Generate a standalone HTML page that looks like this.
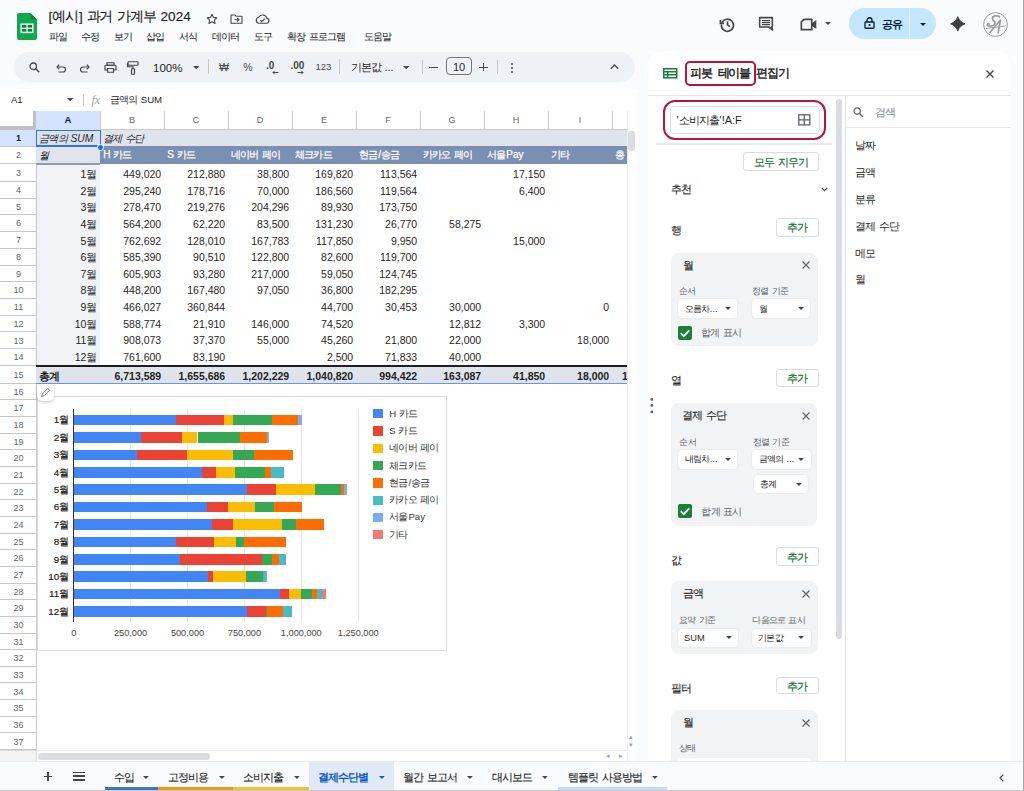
<!DOCTYPE html>
<html><head><meta charset="utf-8">
<style>
*{box-sizing:border-box;margin:0;padding:0}
html,body{width:1024px;height:791px;overflow:hidden;background:#f9fbfd;font-family:"Liberation Sans", sans-serif;color:#1f1f1f}
#root{position:relative;width:1024px;height:791px;overflow:hidden}
.t{position:absolute;height:20px;line-height:20px;white-space:nowrap}
.k{letter-spacing:-0.09em}
svg{position:absolute;overflow:visible}
</style></head><body><div id="root">
<svg style="left:17px;top:12.5px" width="20" height="27" viewBox="0 0 20 27"><path d="M1.8 0H13.5L20 6.5V25.2A1.8 1.8 0 0 1 18.2 27H1.8A1.8 1.8 0 0 1 0 25.2V1.8A1.8 1.8 0 0 1 1.8 0Z" fill="#0ea84f"/><path d="M13.5 0L20 6.5H15A1.5 1.5 0 0 1 13.5 5Z" fill="#0b8a3e"/><rect x="4.2" y="11.2" width="11.6" height="8.2" fill="#0b7f3a" stroke="#e8fff0" stroke-width="1.5"/><line x1="4.2" y1="15.3" x2="15.8" y2="15.3" stroke="#e8fff0" stroke-width="1.3"/><line x1="10" y1="11.2" x2="10" y2="19.4" stroke="#e8fff0" stroke-width="1.3"/></svg><div class="t" style="left:48.50px;top:7.30px;font-size:13.6px;color:#1f1f1f;-webkit-text-stroke:0.15px #1f1f1f">[<span class="k">예</span>시] <span class="k">과</span>거 <span class="k">가계</span>부 2024</div><div class="t" style="left:48.80px;top:27.30px;font-size:10.4px;color:#1f1f1f;-webkit-text-stroke:0.06px #1f1f1f"><span class="k">파</span>일</div><div class="t" style="left:81.40px;top:27.30px;font-size:10.4px;color:#1f1f1f;-webkit-text-stroke:0.06px #1f1f1f"><span class="k">수</span>정</div><div class="t" style="left:113.80px;top:27.30px;font-size:10.4px;color:#1f1f1f;-webkit-text-stroke:0.06px #1f1f1f"><span class="k">보</span>기</div><div class="t" style="left:146.40px;top:27.30px;font-size:10.4px;color:#1f1f1f;-webkit-text-stroke:0.06px #1f1f1f"><span class="k">삽</span>입</div><div class="t" style="left:179.00px;top:27.30px;font-size:10.4px;color:#1f1f1f;-webkit-text-stroke:0.06px #1f1f1f"><span class="k">서</span>식</div><div class="t" style="left:211.70px;top:27.30px;font-size:10.4px;color:#1f1f1f;-webkit-text-stroke:0.06px #1f1f1f"><span class="k">데이</span>터</div><div class="t" style="left:254.30px;top:27.30px;font-size:10.4px;color:#1f1f1f;-webkit-text-stroke:0.06px #1f1f1f"><span class="k">도</span>구</div><div class="t" style="left:286.90px;top:27.30px;font-size:10.4px;color:#1f1f1f;-webkit-text-stroke:0.06px #1f1f1f"><span class="k">확</span>장 <span class="k">프로그</span>램</div><div class="t" style="left:363.70px;top:27.30px;font-size:10.4px;color:#1f1f1f;-webkit-text-stroke:0.06px #1f1f1f"><span class="k">도움</span>말</div><svg style="left:205.5px;top:12.6px" width="12" height="12" viewBox="0 0 24 24"><path d="M12 2.5l2.9 6.3 6.9.7-5.2 4.6 1.5 6.8L12 17.4l-6.1 3.5 1.5-6.8-5.2-4.6 6.9-.7z" fill="none" stroke="#444746" stroke-width="2.2" stroke-linejoin="round"/></svg><svg style="left:230px;top:13.6px" width="13" height="10" viewBox="0 0 26 20"><path d="M2 2h8l2 2.5h12v14H2z" fill="none" stroke="#444746" stroke-width="2.2" stroke-linejoin="round"/><path d="M9 11.5h9M14.5 8l3.5 3.5-3.5 3.5" fill="none" stroke="#444746" stroke-width="2.2"/></svg><svg style="left:254.5px;top:14px" width="15" height="10" viewBox="0 0 30 20"><path d="M8 18.5A6 6 0 0 1 7.5 6.6 8.5 8.5 0 0 1 23.3 8.2 5.2 5.2 0 0 1 23 18.5Z" fill="none" stroke="#444746" stroke-width="2.2" stroke-linejoin="round"/><path d="M10.5 12.5l3 3 6-6" fill="none" stroke="#444746" stroke-width="2.2"/></svg><svg style="left:719px;top:15.5px" width="17" height="17" viewBox="0 0 24 24"><path d="M4.2 9.5A8.5 8.5 0 1 1 3.5 12" fill="none" stroke="#444746" stroke-width="2.4"/><path d="M2 5.5v5h5" fill="none" stroke="#444746" stroke-width="2.4"/><path d="M12 7.5v5l3.5 2.5" fill="none" stroke="#444746" stroke-width="2.4"/></svg><svg style="left:757.5px;top:15.5px" width="16" height="16" viewBox="0 0 24 24"><path d="M2.5 2.5h19v14h-1.5l2 4.5-6-4.5H2.5z" fill="none" stroke="#444746" stroke-width="2.4" stroke-linejoin="round"/><path d="M6 7h12M6 10h12M6 13h12" stroke="#444746" stroke-width="2"/></svg><svg style="left:800px;top:17.5px" width="17" height="13" viewBox="0 0 26 20"><path d="M6 2h12v16H2V6z" fill="none" stroke="#444746" stroke-width="2.6" stroke-linejoin="round"/><path d="M18 8l7-5v14l-7-5z" fill="#444746"/></svg><svg style="left:825px;top:22px" width="6" height="3" viewBox="0 0 6 3"><path d="M0 0h6L3 3z" fill="#444746"/></svg><div style="position:absolute;left:849.00px;top:8.00px;width:87.00px;height:31.00px;background:#c2e7ff;border-radius:16px"></div><div style="position:absolute;left:909.00px;top:8.00px;width:1.00px;height:31.00px;background:#e3f2fd"></div><svg style="left:863.5px;top:17px" width="11" height="12" viewBox="0 0 22 24"><rect x="2" y="10" width="18" height="12.5" rx="1.5" fill="none" stroke="#001d35" stroke-width="2.6"/><path d="M6 10V6.5a5 5 0 0 1 10 0V10" fill="none" stroke="#001d35" stroke-width="2.6"/><circle cx="11" cy="16.2" r="2" fill="#001d35"/></svg><div class="t" style="left:882.00px;top:13.50px;font-size:10.5px;font-weight:bold;color:#001d35"><span class="k">공</span>유</div><svg style="left:920px;top:22.5px" width="6" height="3" viewBox="0 0 6 3"><path d="M0 0h6L3 3z" fill="#001d35"/></svg><svg style="left:949.8px;top:15.9px" width="15.6" height="15.7" viewBox="0 0 16 16"><path d="M8 0.6C9.3 4.2 11.8 6.7 15.4 8C11.8 9.3 9.3 11.8 8 15.4C6.7 11.8 4.2 9.3 0.6 8C4.2 6.7 6.7 4.2 8 0.6Z" fill="#3c4043" stroke="#3c4043" stroke-width="0.9" stroke-linejoin="round"/></svg><svg style="left:983px;top:11.5px" width="25" height="25" viewBox="0 0 25 25"><circle cx="12.5" cy="12.5" r="11.9" fill="none" stroke="#9a9a9a" stroke-width="1"/><path d="M16.5 4.8C14 3 9 3.6 9.5 6.8C10 9.5 13.5 9.8 11.5 12.5C9.5 15 5.5 14.5 4.5 13.2C4 12 5.2 11.5 6.2 12" fill="none" stroke="#9a9a9a" stroke-width="1.7" stroke-linecap="round"/><path d="M6.5 21L17.5 8L15 21.5" fill="none" stroke="#9a9a9a" stroke-width="1.6" stroke-linejoin="round"/><path d="M3 16.5L22.5 14" stroke="#9a9a9a" stroke-width="0.9"/></svg><div style="position:absolute;left:14.00px;top:51.80px;width:620.50px;height:30.40px;background:#eef2f7;border-radius:16px"></div><svg style="left:28.5px;top:61.5px" width="11" height="11" viewBox="0 0 22 22"><circle cx="8.5" cy="8.5" r="6.5" fill="none" stroke="#444746" stroke-width="2.6"/><path d="M13.5 13.5l7 7" stroke="#444746" stroke-width="2.8"/></svg><svg style="left:56px;top:63.5px" width="10" height="8" viewBox="0 0 20 16"><path d="M5 6h9a5 5 0 0 1 0 10H5" fill="none" stroke="#444746" stroke-width="2.4"/><path d="M6.5 1.5L2 6l4.5 4.5" fill="none" stroke="#444746" stroke-width="2.4"/></svg><svg style="left:80px;top:63.5px" width="10" height="8" viewBox="0 0 20 16"><path d="M15 6H6a5 5 0 0 0 0 10h9" fill="none" stroke="#444746" stroke-width="2.4"/><path d="M13.5 1.5L18 6l-4.5 4.5" fill="none" stroke="#444746" stroke-width="2.4"/></svg><svg style="left:103.5px;top:61.5px" width="13" height="11" viewBox="0 0 26 22"><path d="M6 1.5h14v5H6z" fill="none" stroke="#444746" stroke-width="2.4"/><path d="M6 16H2V8.5a2 2 0 0 1 2-2h18a2 2 0 0 1 2 2V16h-4" fill="none" stroke="#444746" stroke-width="2.4"/><path d="M7 13h12v7.5H7z" fill="none" stroke="#444746" stroke-width="2.4"/></svg><svg style="left:127px;top:60.5px" width="12" height="14" viewBox="0 0 24 28"><rect x="2" y="1.5" width="20" height="7" rx="1.5" fill="none" stroke="#444746" stroke-width="2.4"/><path d="M2 5H1v6.5h11v4" fill="none" stroke="#444746" stroke-width="2.4"/><rect x="9" y="15.5" width="6" height="11" rx="1" fill="none" stroke="#444746" stroke-width="2.4"/></svg><div class="t" style="left:153.00px;top:57.50px;font-size:11.5px;color:#1f1f1f">100%</div><svg style="left:192.6px;top:66px" width="6.5" height="3.3" viewBox="0 0 6 3" preserveAspectRatio="none"><path d="M0 0h6L3 3z" fill="#444746"/></svg><div style="position:absolute;left:208.00px;top:58.70px;width:1.00px;height:15.60px;background:#c7c7c7"></div><div class="t" style="left:219.00px;top:57.00px;font-size:10.5px;color:#444746">₩</div><div class="t" style="left:243.30px;top:57.00px;font-size:10.5px;color:#444746">%</div><div class="t" style="left:266.00px;top:56.00px;font-size:10px;font-weight:bold;color:#444746">.0</div><svg style="left:272px;top:70px" width="7" height="5" viewBox="0 0 14 10"><path d="M13 5H2M5.5 1.5L2 5l3.5 3.5" fill="none" stroke="#444746" stroke-width="2"/></svg><div class="t" style="left:290.50px;top:56.00px;font-size:10px;font-weight:bold;color:#444746">.00</div><svg style="left:297px;top:70px" width="7" height="5" viewBox="0 0 14 10"><path d="M1 5h11M8.5 1.5L12 5l-3.5 3.5" fill="none" stroke="#444746" stroke-width="2"/></svg><div class="t" style="left:315.50px;top:57.00px;font-size:9.5px;color:#444746">123</div><div style="position:absolute;left:338.50px;top:58.70px;width:1.00px;height:15.60px;background:#c7c7c7"></div><div class="t" style="left:350.50px;top:57.00px;font-size:10.5px;color:#1f1f1f"><span class="k">기본</span>값 ...</div><svg style="left:403px;top:65.5px" width="6.5" height="3.3" viewBox="0 0 6 3" preserveAspectRatio="none"><path d="M0 0h6L3 3z" fill="#444746"/></svg><div style="position:absolute;left:421.50px;top:59.50px;width:1.00px;height:14.80px;background:#c7c7c7"></div><div style="position:absolute;left:429.00px;top:66.50px;width:8.50px;height:1.20px;background:#444746"></div><div style="position:absolute;left:445.70px;top:57.20px;width:26.10px;height:18.30px;border:1px solid #747775;border-radius:4px"></div><div class="t" style="left:446.00px;top:56.50px;font-size:11px;color:#1f1f1f"><div style="width:26px;text-align:center">10</div></div><div style="position:absolute;left:479.00px;top:66.50px;width:8.70px;height:1.20px;background:#444746"></div><div style="position:absolute;left:482.75px;top:62.70px;width:1.20px;height:8.70px;background:#444746"></div><div style="position:absolute;left:496.50px;top:59.50px;width:1.00px;height:14.80px;background:#c7c7c7"></div><div style="position:absolute;left:510.90px;top:63.30px;width:2.20px;height:2.20px;background:#444746;border-radius:50%"></div><div style="position:absolute;left:510.90px;top:67.00px;width:2.20px;height:2.20px;background:#444746;border-radius:50%"></div><div style="position:absolute;left:510.90px;top:70.70px;width:2.20px;height:2.20px;background:#444746;border-radius:50%"></div><svg style="left:609.5px;top:64.3px" width="9" height="5.5" viewBox="0 0 18 11"><path d="M1.5 9.5L9 2l7.5 7.5" fill="none" stroke="#444746" stroke-width="2.6"/></svg><div style="position:absolute;left:0.00px;top:88.50px;width:637.00px;height:22.50px;background:#fff"></div><div class="t" style="left:11.00px;top:90.30px;font-size:9.5px;color:#1f1f1f">A1</div><svg style="left:67.4px;top:98.2px" width="6.4" height="3.2" viewBox="0 0 6 3" preserveAspectRatio="none"><path d="M0 0h6L3 3z" fill="#444746"/></svg><div style="position:absolute;left:83.20px;top:93.80px;width:1.00px;height:12.20px;background:#c7c7c7"></div><div class="t" style="left:91.50px;top:90.20px;font-family:Liberation Serif,serif;font-size:12px;color:#9aa0a6"><i>fx</i></div><div class="t" style="left:109.80px;top:90.20px;font-size:9.6px;color:#1f1f1f"><span class="k">금액</span>의 SUM</div><div style="position:absolute;left:0.00px;top:111.00px;width:627.00px;height:650.00px;background:#fff"></div><div style="position:absolute;left:0.00px;top:111.00px;width:627.00px;height:18.50px;background:#fff;border-bottom:1px solid #c7c7c7"></div><div style="position:absolute;left:36.00px;top:111.00px;width:64.00px;height:18.50px;background:#d3e3fd"></div><div style="position:absolute;left:99.50px;top:111.00px;width:1.00px;height:18.50px;background:#d0d0d0"></div><div style="position:absolute;left:163.50px;top:111.00px;width:1.00px;height:18.50px;background:#d0d0d0"></div><div style="position:absolute;left:227.50px;top:111.00px;width:1.00px;height:18.50px;background:#d0d0d0"></div><div style="position:absolute;left:291.50px;top:111.00px;width:1.00px;height:18.50px;background:#d0d0d0"></div><div style="position:absolute;left:355.50px;top:111.00px;width:1.00px;height:18.50px;background:#d0d0d0"></div><div style="position:absolute;left:419.50px;top:111.00px;width:1.00px;height:18.50px;background:#d0d0d0"></div><div style="position:absolute;left:483.50px;top:111.00px;width:1.00px;height:18.50px;background:#d0d0d0"></div><div style="position:absolute;left:547.50px;top:111.00px;width:1.00px;height:18.50px;background:#d0d0d0"></div><div style="position:absolute;left:611.50px;top:111.00px;width:1.00px;height:18.50px;background:#d0d0d0"></div><div class="t" style="left:-32.00px;width:200px;text-align:center;top:110.30px;font-size:9.5px;font-weight:bold;color:#041e49">A</div><div class="t" style="left:32.00px;width:200px;text-align:center;top:110.30px;font-size:9px;color:#5f6368">B</div><div class="t" style="left:96.00px;width:200px;text-align:center;top:110.30px;font-size:9px;color:#5f6368">C</div><div class="t" style="left:160.00px;width:200px;text-align:center;top:110.30px;font-size:9px;color:#5f6368">D</div><div class="t" style="left:224.00px;width:200px;text-align:center;top:110.30px;font-size:9px;color:#5f6368">E</div><div class="t" style="left:288.00px;width:200px;text-align:center;top:110.30px;font-size:9px;color:#5f6368">F</div><div class="t" style="left:352.00px;width:200px;text-align:center;top:110.30px;font-size:9px;color:#5f6368">G</div><div class="t" style="left:416.00px;width:200px;text-align:center;top:110.30px;font-size:9px;color:#5f6368">H</div><div class="t" style="left:480.00px;width:200px;text-align:center;top:110.30px;font-size:9px;color:#5f6368">I</div><div style="position:absolute;left:0.00px;top:111.00px;width:33.00px;height:15.00px;background:#fff"></div><div style="position:absolute;left:33.00px;top:111.00px;width:3.00px;height:18.50px;background:#c0c0c0"></div><div style="position:absolute;left:0.00px;top:126.00px;width:36.00px;height:3.70px;background:#c0c0c0"></div><div style="position:absolute;left:0.00px;top:129.70px;width:36.00px;height:16.70px;background:#d3e3fd"></div><div style="position:absolute;left:0.00px;top:145.90px;width:36.00px;height:1.00px;background:#c7c7c7"></div><div class="t" style="left:-81.50px;width:200px;text-align:center;top:128.35px;font-size:9px;font-weight:bold;color:#041e49">1</div><div style="position:absolute;left:0.00px;top:163.00px;width:36.00px;height:1.00px;background:#c7c7c7"></div><div class="t" style="left:-81.50px;width:200px;text-align:center;top:145.25px;font-size:9px;color:#5f6368">2</div><div style="position:absolute;left:0.00px;top:180.50px;width:36.00px;height:1.00px;background:#c7c7c7"></div><div class="t" style="left:-81.50px;width:200px;text-align:center;top:162.55px;font-size:9px;color:#5f6368">3</div><div style="position:absolute;left:0.00px;top:197.50px;width:36.00px;height:1.00px;background:#c7c7c7"></div><div class="t" style="left:-81.50px;width:200px;text-align:center;top:179.80px;font-size:9px;color:#5f6368">4</div><div style="position:absolute;left:0.00px;top:214.20px;width:36.00px;height:1.00px;background:#c7c7c7"></div><div class="t" style="left:-81.50px;width:200px;text-align:center;top:196.65px;font-size:9px;color:#5f6368">5</div><div style="position:absolute;left:0.00px;top:231.10px;width:36.00px;height:1.00px;background:#c7c7c7"></div><div class="t" style="left:-81.50px;width:200px;text-align:center;top:213.45px;font-size:9px;color:#5f6368">6</div><div style="position:absolute;left:0.00px;top:247.80px;width:36.00px;height:1.00px;background:#c7c7c7"></div><div class="t" style="left:-81.50px;width:200px;text-align:center;top:230.25px;font-size:9px;color:#5f6368">7</div><div style="position:absolute;left:0.00px;top:264.51px;width:36.00px;height:1.00px;background:#c7c7c7"></div><div class="t" style="left:-81.50px;width:200px;text-align:center;top:246.96px;font-size:9px;color:#5f6368">8</div><div style="position:absolute;left:0.00px;top:281.23px;width:36.00px;height:1.00px;background:#c7c7c7"></div><div class="t" style="left:-81.50px;width:200px;text-align:center;top:263.67px;font-size:9px;color:#5f6368">9</div><div style="position:absolute;left:0.00px;top:297.94px;width:36.00px;height:1.00px;background:#c7c7c7"></div><div class="t" style="left:-81.50px;width:200px;text-align:center;top:280.39px;font-size:9px;color:#5f6368">10</div><div style="position:absolute;left:0.00px;top:314.66px;width:36.00px;height:1.00px;background:#c7c7c7"></div><div class="t" style="left:-81.50px;width:200px;text-align:center;top:297.10px;font-size:9px;color:#5f6368">11</div><div style="position:absolute;left:0.00px;top:331.37px;width:36.00px;height:1.00px;background:#c7c7c7"></div><div class="t" style="left:-81.50px;width:200px;text-align:center;top:313.81px;font-size:9px;color:#5f6368">12</div><div style="position:absolute;left:0.00px;top:348.08px;width:36.00px;height:1.00px;background:#c7c7c7"></div><div class="t" style="left:-81.50px;width:200px;text-align:center;top:330.53px;font-size:9px;color:#5f6368">13</div><div style="position:absolute;left:0.00px;top:364.80px;width:36.00px;height:1.00px;background:#c7c7c7"></div><div class="t" style="left:-81.50px;width:200px;text-align:center;top:347.24px;font-size:9px;color:#5f6368">14</div><div style="position:absolute;left:0.00px;top:382.70px;width:36.00px;height:1.00px;background:#c7c7c7"></div><div class="t" style="left:-81.50px;width:200px;text-align:center;top:364.55px;font-size:9px;color:#5f6368">15</div><div style="position:absolute;left:0.00px;top:399.20px;width:36.00px;height:1.00px;background:#c7c7c7"></div><div class="t" style="left:-81.50px;width:200px;text-align:center;top:381.75px;font-size:9px;color:#5f6368">16</div><div style="position:absolute;left:0.00px;top:416.00px;width:36.00px;height:1.00px;background:#c7c7c7"></div><div class="t" style="left:-81.50px;width:200px;text-align:center;top:398.40px;font-size:9px;color:#5f6368">17</div><div style="position:absolute;left:0.00px;top:432.65px;width:36.00px;height:1.00px;background:#c7c7c7"></div><div class="t" style="left:-81.50px;width:200px;text-align:center;top:415.13px;font-size:9px;color:#5f6368">18</div><div style="position:absolute;left:0.00px;top:449.31px;width:36.00px;height:1.00px;background:#c7c7c7"></div><div class="t" style="left:-81.50px;width:200px;text-align:center;top:431.78px;font-size:9px;color:#5f6368">19</div><div style="position:absolute;left:0.00px;top:465.97px;width:36.00px;height:1.00px;background:#c7c7c7"></div><div class="t" style="left:-81.50px;width:200px;text-align:center;top:448.44px;font-size:9px;color:#5f6368">20</div><div style="position:absolute;left:0.00px;top:482.62px;width:36.00px;height:1.00px;background:#c7c7c7"></div><div class="t" style="left:-81.50px;width:200px;text-align:center;top:465.09px;font-size:9px;color:#5f6368">21</div><div style="position:absolute;left:0.00px;top:499.27px;width:36.00px;height:1.00px;background:#c7c7c7"></div><div class="t" style="left:-81.50px;width:200px;text-align:center;top:481.75px;font-size:9px;color:#5f6368">22</div><div style="position:absolute;left:0.00px;top:515.93px;width:36.00px;height:1.00px;background:#c7c7c7"></div><div class="t" style="left:-81.50px;width:200px;text-align:center;top:498.40px;font-size:9px;color:#5f6368">23</div><div style="position:absolute;left:0.00px;top:532.59px;width:36.00px;height:1.00px;background:#c7c7c7"></div><div class="t" style="left:-81.50px;width:200px;text-align:center;top:515.06px;font-size:9px;color:#5f6368">24</div><div style="position:absolute;left:0.00px;top:549.24px;width:36.00px;height:1.00px;background:#c7c7c7"></div><div class="t" style="left:-81.50px;width:200px;text-align:center;top:531.71px;font-size:9px;color:#5f6368">25</div><div style="position:absolute;left:0.00px;top:565.89px;width:36.00px;height:1.00px;background:#c7c7c7"></div><div class="t" style="left:-81.50px;width:200px;text-align:center;top:548.37px;font-size:9px;color:#5f6368">26</div><div style="position:absolute;left:0.00px;top:582.55px;width:36.00px;height:1.00px;background:#c7c7c7"></div><div class="t" style="left:-81.50px;width:200px;text-align:center;top:565.02px;font-size:9px;color:#5f6368">27</div><div style="position:absolute;left:0.00px;top:599.21px;width:36.00px;height:1.00px;background:#c7c7c7"></div><div class="t" style="left:-81.50px;width:200px;text-align:center;top:581.68px;font-size:9px;color:#5f6368">28</div><div style="position:absolute;left:0.00px;top:615.86px;width:36.00px;height:1.00px;background:#c7c7c7"></div><div class="t" style="left:-81.50px;width:200px;text-align:center;top:598.33px;font-size:9px;color:#5f6368">29</div><div style="position:absolute;left:0.00px;top:632.51px;width:36.00px;height:1.00px;background:#c7c7c7"></div><div class="t" style="left:-81.50px;width:200px;text-align:center;top:614.99px;font-size:9px;color:#5f6368">30</div><div style="position:absolute;left:0.00px;top:649.17px;width:36.00px;height:1.00px;background:#c7c7c7"></div><div class="t" style="left:-81.50px;width:200px;text-align:center;top:631.64px;font-size:9px;color:#5f6368">31</div><div style="position:absolute;left:0.00px;top:665.83px;width:36.00px;height:1.00px;background:#c7c7c7"></div><div class="t" style="left:-81.50px;width:200px;text-align:center;top:648.30px;font-size:9px;color:#5f6368">32</div><div style="position:absolute;left:0.00px;top:682.48px;width:36.00px;height:1.00px;background:#c7c7c7"></div><div class="t" style="left:-81.50px;width:200px;text-align:center;top:664.95px;font-size:9px;color:#5f6368">33</div><div style="position:absolute;left:0.00px;top:699.13px;width:36.00px;height:1.00px;background:#c7c7c7"></div><div class="t" style="left:-81.50px;width:200px;text-align:center;top:681.61px;font-size:9px;color:#5f6368">34</div><div style="position:absolute;left:0.00px;top:715.79px;width:36.00px;height:1.00px;background:#c7c7c7"></div><div class="t" style="left:-81.50px;width:200px;text-align:center;top:698.26px;font-size:9px;color:#5f6368">35</div><div style="position:absolute;left:0.00px;top:732.45px;width:36.00px;height:1.00px;background:#c7c7c7"></div><div class="t" style="left:-81.50px;width:200px;text-align:center;top:714.92px;font-size:9px;color:#5f6368">36</div><div style="position:absolute;left:0.00px;top:749.10px;width:36.00px;height:1.00px;background:#c7c7c7"></div><div class="t" style="left:-81.50px;width:200px;text-align:center;top:731.57px;font-size:9px;color:#5f6368">37</div><div style="position:absolute;left:35.50px;top:129.70px;width:1.00px;height:619.90px;background:#c7c7c7"></div><div style="position:absolute;left:36.00px;top:129.70px;width:591.00px;height:16.70px;background:#dfe3eb"></div><div style="position:absolute;left:36.00px;top:146.40px;width:64.00px;height:18.10px;background:#e1e4ea"></div><div style="position:absolute;left:100.00px;top:146.40px;width:527.00px;height:18.00px;background:#7b8fb2"></div><div style="position:absolute;left:36.00px;top:163.30px;width:64.00px;height:1.40px;background:#8b9bb8"></div><div style="position:absolute;left:36.50px;top:164.50px;width:63.50px;height:200.80px;background:#f1f3f6"></div><div style="position:absolute;left:36.00px;top:364.80px;width:591.00px;height:2.30px;background:#1f1f1f"></div><div style="position:absolute;left:36.00px;top:367.10px;width:591.00px;height:15.50px;background:#dfe3eb"></div><div style="position:absolute;left:36.00px;top:382.60px;width:591.00px;height:1.10px;background:#5e97f6"></div><div style="position:absolute;left:36.00px;top:129.70px;width:64.50px;height:17.20px;border:1.3px solid #2f74e0;border-bottom-width:2px;background:rgba(205,220,250,0.35)"></div><div style="position:absolute;left:97.20px;top:144.10px;width:6.60px;height:6.60px;background:#1a73e8;border:1px solid #fff;border-radius:50%"></div><div class="t" style="left:39.40px;top:128.80px;font-size:10.3px;color:#1f1f1f"><i><span class="k">금액</span>의 SUM</i></div><div class="t" style="left:103.20px;top:128.80px;font-size:10.3px;color:#1f1f1f"><i><span class="k">결</span>제 <span class="k">수</span>단</i></div><div class="t" style="left:39.40px;top:145.50px;font-size:10.3px;color:#1f1f1f"><i>월</i></div><div class="t" style="left:103.20px;top:144.90px;font-size:10px;color:#fff;-webkit-text-stroke:0.25px #fff">H <span class="k">카</span>드</div><div class="t" style="left:167.20px;top:144.90px;font-size:10px;color:#fff;-webkit-text-stroke:0.25px #fff">S <span class="k">카</span>드</div><div class="t" style="left:231.20px;top:144.90px;font-size:10px;color:#fff;-webkit-text-stroke:0.25px #fff"><span class="k">네이</span>버 <span class="k">페</span>이</div><div class="t" style="left:295.20px;top:144.90px;font-size:10px;color:#fff;-webkit-text-stroke:0.25px #fff"><span class="k">체크카</span>드</div><div class="t" style="left:359.20px;top:144.90px;font-size:10px;color:#fff;-webkit-text-stroke:0.25px #fff"><span class="k">현</span>금/<span class="k">송</span>금</div><div class="t" style="left:423.20px;top:144.90px;font-size:10px;color:#fff;-webkit-text-stroke:0.25px #fff"><span class="k">카카</span>오 <span class="k">페</span>이</div><div class="t" style="left:487.20px;top:144.90px;font-size:10px;color:#fff;-webkit-text-stroke:0.25px #fff"><span class="k">서</span>울Pay</div><div class="t" style="left:551.20px;top:144.90px;font-size:10px;color:#fff;-webkit-text-stroke:0.25px #fff"><span class="k">기</span>타</div><div class="t" style="left:615.20px;top:144.90px;font-size:10px;color:#fff;-webkit-text-stroke:0.25px #fff">총</div><div class="t" style="right:926.60px;top:164.10px;font-size:10.5px;color:#1f1f1f">1월</div><div class="t" style="right:862.80px;top:164.10px;font-size:10.5px;color:#1f1f1f">449,020</div><div class="t" style="right:798.80px;top:164.10px;font-size:10.5px;color:#1f1f1f">212,880</div><div class="t" style="right:734.80px;top:164.10px;font-size:10.5px;color:#1f1f1f">38,800</div><div class="t" style="right:670.80px;top:164.10px;font-size:10.5px;color:#1f1f1f">169,820</div><div class="t" style="right:606.80px;top:164.10px;font-size:10.5px;color:#1f1f1f">113,564</div><div class="t" style="right:478.80px;top:164.10px;font-size:10.5px;color:#1f1f1f">17,150</div><div class="t" style="right:926.60px;top:180.72px;font-size:10.5px;color:#1f1f1f">2월</div><div class="t" style="right:862.80px;top:180.72px;font-size:10.5px;color:#1f1f1f">295,240</div><div class="t" style="right:798.80px;top:180.72px;font-size:10.5px;color:#1f1f1f">178,716</div><div class="t" style="right:734.80px;top:180.72px;font-size:10.5px;color:#1f1f1f">70,000</div><div class="t" style="right:670.80px;top:180.72px;font-size:10.5px;color:#1f1f1f">186,560</div><div class="t" style="right:606.80px;top:180.72px;font-size:10.5px;color:#1f1f1f">119,564</div><div class="t" style="right:478.80px;top:180.72px;font-size:10.5px;color:#1f1f1f">6,400</div><div class="t" style="right:926.60px;top:197.34px;font-size:10.5px;color:#1f1f1f">3월</div><div class="t" style="right:862.80px;top:197.34px;font-size:10.5px;color:#1f1f1f">278,470</div><div class="t" style="right:798.80px;top:197.34px;font-size:10.5px;color:#1f1f1f">219,276</div><div class="t" style="right:734.80px;top:197.34px;font-size:10.5px;color:#1f1f1f">204,296</div><div class="t" style="right:670.80px;top:197.34px;font-size:10.5px;color:#1f1f1f">89,930</div><div class="t" style="right:606.80px;top:197.34px;font-size:10.5px;color:#1f1f1f">173,750</div><div class="t" style="right:926.60px;top:213.96px;font-size:10.5px;color:#1f1f1f">4월</div><div class="t" style="right:862.80px;top:213.96px;font-size:10.5px;color:#1f1f1f">564,200</div><div class="t" style="right:798.80px;top:213.96px;font-size:10.5px;color:#1f1f1f">62,220</div><div class="t" style="right:734.80px;top:213.96px;font-size:10.5px;color:#1f1f1f">83,500</div><div class="t" style="right:670.80px;top:213.96px;font-size:10.5px;color:#1f1f1f">131,230</div><div class="t" style="right:606.80px;top:213.96px;font-size:10.5px;color:#1f1f1f">26,770</div><div class="t" style="right:542.80px;top:213.96px;font-size:10.5px;color:#1f1f1f">58,275</div><div class="t" style="right:926.60px;top:230.58px;font-size:10.5px;color:#1f1f1f">5월</div><div class="t" style="right:862.80px;top:230.58px;font-size:10.5px;color:#1f1f1f">762,692</div><div class="t" style="right:798.80px;top:230.58px;font-size:10.5px;color:#1f1f1f">128,010</div><div class="t" style="right:734.80px;top:230.58px;font-size:10.5px;color:#1f1f1f">167,783</div><div class="t" style="right:670.80px;top:230.58px;font-size:10.5px;color:#1f1f1f">117,850</div><div class="t" style="right:606.80px;top:230.58px;font-size:10.5px;color:#1f1f1f">9,950</div><div class="t" style="right:478.80px;top:230.58px;font-size:10.5px;color:#1f1f1f">15,000</div><div class="t" style="right:926.60px;top:247.20px;font-size:10.5px;color:#1f1f1f">6월</div><div class="t" style="right:862.80px;top:247.20px;font-size:10.5px;color:#1f1f1f">585,390</div><div class="t" style="right:798.80px;top:247.20px;font-size:10.5px;color:#1f1f1f">90,510</div><div class="t" style="right:734.80px;top:247.20px;font-size:10.5px;color:#1f1f1f">122,800</div><div class="t" style="right:670.80px;top:247.20px;font-size:10.5px;color:#1f1f1f">82,600</div><div class="t" style="right:606.80px;top:247.20px;font-size:10.5px;color:#1f1f1f">119,700</div><div class="t" style="right:926.60px;top:263.82px;font-size:10.5px;color:#1f1f1f">7월</div><div class="t" style="right:862.80px;top:263.82px;font-size:10.5px;color:#1f1f1f">605,903</div><div class="t" style="right:798.80px;top:263.82px;font-size:10.5px;color:#1f1f1f">93,280</div><div class="t" style="right:734.80px;top:263.82px;font-size:10.5px;color:#1f1f1f">217,000</div><div class="t" style="right:670.80px;top:263.82px;font-size:10.5px;color:#1f1f1f">59,050</div><div class="t" style="right:606.80px;top:263.82px;font-size:10.5px;color:#1f1f1f">124,745</div><div class="t" style="right:926.60px;top:280.44px;font-size:10.5px;color:#1f1f1f">8월</div><div class="t" style="right:862.80px;top:280.44px;font-size:10.5px;color:#1f1f1f">448,200</div><div class="t" style="right:798.80px;top:280.44px;font-size:10.5px;color:#1f1f1f">167,480</div><div class="t" style="right:734.80px;top:280.44px;font-size:10.5px;color:#1f1f1f">97,050</div><div class="t" style="right:670.80px;top:280.44px;font-size:10.5px;color:#1f1f1f">36,800</div><div class="t" style="right:606.80px;top:280.44px;font-size:10.5px;color:#1f1f1f">182,295</div><div class="t" style="right:926.60px;top:297.06px;font-size:10.5px;color:#1f1f1f">9월</div><div class="t" style="right:862.80px;top:297.06px;font-size:10.5px;color:#1f1f1f">466,027</div><div class="t" style="right:798.80px;top:297.06px;font-size:10.5px;color:#1f1f1f">360,844</div><div class="t" style="right:670.80px;top:297.06px;font-size:10.5px;color:#1f1f1f">44,700</div><div class="t" style="right:606.80px;top:297.06px;font-size:10.5px;color:#1f1f1f">30,453</div><div class="t" style="right:542.80px;top:297.06px;font-size:10.5px;color:#1f1f1f">30,000</div><div class="t" style="right:414.80px;top:297.06px;font-size:10.5px;color:#1f1f1f">0</div><div class="t" style="right:926.60px;top:313.68px;font-size:10.5px;color:#1f1f1f">10월</div><div class="t" style="right:862.80px;top:313.68px;font-size:10.5px;color:#1f1f1f">588,774</div><div class="t" style="right:798.80px;top:313.68px;font-size:10.5px;color:#1f1f1f">21,910</div><div class="t" style="right:734.80px;top:313.68px;font-size:10.5px;color:#1f1f1f">146,000</div><div class="t" style="right:670.80px;top:313.68px;font-size:10.5px;color:#1f1f1f">74,520</div><div class="t" style="right:542.80px;top:313.68px;font-size:10.5px;color:#1f1f1f">12,812</div><div class="t" style="right:478.80px;top:313.68px;font-size:10.5px;color:#1f1f1f">3,300</div><div class="t" style="right:926.60px;top:330.30px;font-size:10.5px;color:#1f1f1f">11월</div><div class="t" style="right:862.80px;top:330.30px;font-size:10.5px;color:#1f1f1f">908,073</div><div class="t" style="right:798.80px;top:330.30px;font-size:10.5px;color:#1f1f1f">37,370</div><div class="t" style="right:734.80px;top:330.30px;font-size:10.5px;color:#1f1f1f">55,000</div><div class="t" style="right:670.80px;top:330.30px;font-size:10.5px;color:#1f1f1f">45,260</div><div class="t" style="right:606.80px;top:330.30px;font-size:10.5px;color:#1f1f1f">21,800</div><div class="t" style="right:542.80px;top:330.30px;font-size:10.5px;color:#1f1f1f">22,000</div><div class="t" style="right:414.80px;top:330.30px;font-size:10.5px;color:#1f1f1f">18,000</div><div class="t" style="right:926.60px;top:346.92px;font-size:10.5px;color:#1f1f1f">12월</div><div class="t" style="right:862.80px;top:346.92px;font-size:10.5px;color:#1f1f1f">761,600</div><div class="t" style="right:798.80px;top:346.92px;font-size:10.5px;color:#1f1f1f">83,190</div><div class="t" style="right:670.80px;top:346.92px;font-size:10.5px;color:#1f1f1f">2,500</div><div class="t" style="right:606.80px;top:346.92px;font-size:10.5px;color:#1f1f1f">71,833</div><div class="t" style="right:542.80px;top:346.92px;font-size:10.5px;color:#1f1f1f">40,000</div><div class="t" style="left:39.00px;top:365.85px;font-size:10.5px;font-weight:bold;color:#1f1f1f"><span class="k">총</span>계</div><div class="t" style="right:862.80px;top:365.85px;font-size:10.5px;font-weight:bold;color:#1f1f1f">6,713,589</div><div class="t" style="right:798.80px;top:365.85px;font-size:10.5px;font-weight:bold;color:#1f1f1f">1,655,686</div><div class="t" style="right:734.80px;top:365.85px;font-size:10.5px;font-weight:bold;color:#1f1f1f">1,202,229</div><div class="t" style="right:670.80px;top:365.85px;font-size:10.5px;font-weight:bold;color:#1f1f1f">1,040,820</div><div class="t" style="right:606.80px;top:365.85px;font-size:10.5px;font-weight:bold;color:#1f1f1f">994,422</div><div class="t" style="right:542.80px;top:365.85px;font-size:10.5px;font-weight:bold;color:#1f1f1f">163,087</div><div class="t" style="right:478.80px;top:365.85px;font-size:10.5px;font-weight:bold;color:#1f1f1f">41,850</div><div class="t" style="right:414.80px;top:365.85px;font-size:10.5px;font-weight:bold;color:#1f1f1f">18,000</div><div class="t" style="left:622.00px;top:365.85px;font-size:10.5px;font-weight:bold;color:#1f1f1f">1</div><div style="position:absolute;left:36.50px;top:395.50px;width:410.50px;height:255.00px;border:1px solid #dadce0;background:#fff"></div><div style="position:absolute;left:130.10px;top:408.80px;width:1.00px;height:213.70px;background:#e6e6e6"></div><div style="position:absolute;left:187.00px;top:408.80px;width:1.00px;height:213.70px;background:#e6e6e6"></div><div style="position:absolute;left:243.90px;top:408.80px;width:1.00px;height:213.70px;background:#e6e6e6"></div><div style="position:absolute;left:300.80px;top:408.80px;width:1.00px;height:213.70px;background:#e6e6e6"></div><div style="position:absolute;left:357.70px;top:408.80px;width:1.00px;height:213.70px;background:#e6e6e6"></div><div style="position:absolute;left:73.70px;top:414.70px;width:102.20px;height:10.70px;background:#4285f4"></div><div style="position:absolute;left:175.90px;top:414.70px;width:48.45px;height:10.70px;background:#ea4335"></div><div style="position:absolute;left:224.35px;top:414.70px;width:8.83px;height:10.70px;background:#fbbc04"></div><div style="position:absolute;left:233.18px;top:414.70px;width:38.65px;height:10.70px;background:#34a853"></div><div style="position:absolute;left:271.83px;top:414.70px;width:25.85px;height:10.70px;background:#ff6d01"></div><div style="position:absolute;left:297.68px;top:414.70px;width:3.90px;height:10.70px;background:#7baaf7"></div><div class="t" style="right:954.80px;top:410.30px;font-size:9.8px;color:#222;-webkit-text-stroke:0.2px #222">1월</div><div style="position:absolute;left:73.70px;top:432.10px;width:67.20px;height:10.70px;background:#4285f4"></div><div style="position:absolute;left:140.90px;top:432.10px;width:40.68px;height:10.70px;background:#ea4335"></div><div style="position:absolute;left:181.57px;top:432.10px;width:15.93px;height:10.70px;background:#fbbc04"></div><div style="position:absolute;left:197.50px;top:432.10px;width:42.46px;height:10.70px;background:#34a853"></div><div style="position:absolute;left:239.97px;top:432.10px;width:27.21px;height:10.70px;background:#ff6d01"></div><div style="position:absolute;left:267.18px;top:432.10px;width:1.46px;height:10.70px;background:#7baaf7"></div><div class="t" style="right:954.80px;top:427.70px;font-size:9.8px;color:#222;-webkit-text-stroke:0.2px #222">2월</div><div style="position:absolute;left:73.70px;top:449.50px;width:63.38px;height:10.70px;background:#4285f4"></div><div style="position:absolute;left:137.08px;top:449.50px;width:49.91px;height:10.70px;background:#ea4335"></div><div style="position:absolute;left:186.99px;top:449.50px;width:46.50px;height:10.70px;background:#fbbc04"></div><div style="position:absolute;left:233.48px;top:449.50px;width:20.47px;height:10.70px;background:#34a853"></div><div style="position:absolute;left:253.95px;top:449.50px;width:39.55px;height:10.70px;background:#ff6d01"></div><div class="t" style="right:954.80px;top:445.10px;font-size:9.8px;color:#222;-webkit-text-stroke:0.2px #222">3월</div><div style="position:absolute;left:73.70px;top:466.90px;width:128.41px;height:10.70px;background:#4285f4"></div><div style="position:absolute;left:202.11px;top:466.90px;width:14.16px;height:10.70px;background:#ea4335"></div><div style="position:absolute;left:216.27px;top:466.90px;width:19.00px;height:10.70px;background:#fbbc04"></div><div style="position:absolute;left:235.28px;top:466.90px;width:29.87px;height:10.70px;background:#34a853"></div><div style="position:absolute;left:265.15px;top:466.90px;width:6.09px;height:10.70px;background:#ff6d01"></div><div style="position:absolute;left:271.24px;top:466.90px;width:13.26px;height:10.70px;background:#46bdc6"></div><div class="t" style="right:954.80px;top:462.50px;font-size:9.8px;color:#222;-webkit-text-stroke:0.2px #222">4월</div><div style="position:absolute;left:73.70px;top:484.30px;width:173.59px;height:10.70px;background:#4285f4"></div><div style="position:absolute;left:247.29px;top:484.30px;width:29.14px;height:10.70px;background:#ea4335"></div><div style="position:absolute;left:276.42px;top:484.30px;width:38.19px;height:10.70px;background:#fbbc04"></div><div style="position:absolute;left:314.61px;top:484.30px;width:26.82px;height:10.70px;background:#34a853"></div><div style="position:absolute;left:341.43px;top:484.30px;width:2.26px;height:10.70px;background:#ff6d01"></div><div style="position:absolute;left:343.70px;top:484.30px;width:3.41px;height:10.70px;background:#7baaf7"></div><div class="t" style="right:954.80px;top:479.90px;font-size:9.8px;color:#222;-webkit-text-stroke:0.2px #222">5월</div><div style="position:absolute;left:73.70px;top:501.70px;width:133.23px;height:10.70px;background:#4285f4"></div><div style="position:absolute;left:206.93px;top:501.70px;width:20.60px;height:10.70px;background:#ea4335"></div><div style="position:absolute;left:227.53px;top:501.70px;width:27.95px;height:10.70px;background:#fbbc04"></div><div style="position:absolute;left:255.48px;top:501.70px;width:18.80px;height:10.70px;background:#34a853"></div><div style="position:absolute;left:274.28px;top:501.70px;width:27.24px;height:10.70px;background:#ff6d01"></div><div class="t" style="right:954.80px;top:497.30px;font-size:9.8px;color:#222;-webkit-text-stroke:0.2px #222">6월</div><div style="position:absolute;left:73.70px;top:519.10px;width:137.90px;height:10.70px;background:#4285f4"></div><div style="position:absolute;left:211.60px;top:519.10px;width:21.23px;height:10.70px;background:#ea4335"></div><div style="position:absolute;left:232.83px;top:519.10px;width:49.39px;height:10.70px;background:#fbbc04"></div><div style="position:absolute;left:282.22px;top:519.10px;width:13.44px;height:10.70px;background:#34a853"></div><div style="position:absolute;left:295.66px;top:519.10px;width:28.39px;height:10.70px;background:#ff6d01"></div><div class="t" style="right:954.80px;top:514.70px;font-size:9.8px;color:#222;-webkit-text-stroke:0.2px #222">7월</div><div style="position:absolute;left:73.70px;top:536.50px;width:102.01px;height:10.70px;background:#4285f4"></div><div style="position:absolute;left:175.71px;top:536.50px;width:38.12px;height:10.70px;background:#ea4335"></div><div style="position:absolute;left:213.83px;top:536.50px;width:22.09px;height:10.70px;background:#fbbc04"></div><div style="position:absolute;left:235.92px;top:536.50px;width:8.38px;height:10.70px;background:#34a853"></div><div style="position:absolute;left:244.29px;top:536.50px;width:41.49px;height:10.70px;background:#ff6d01"></div><div class="t" style="right:954.80px;top:532.10px;font-size:9.8px;color:#222;-webkit-text-stroke:0.2px #222">8월</div><div style="position:absolute;left:73.70px;top:553.90px;width:106.07px;height:10.70px;background:#4285f4"></div><div style="position:absolute;left:179.77px;top:553.90px;width:82.13px;height:10.70px;background:#ea4335"></div><div style="position:absolute;left:261.90px;top:553.90px;width:10.17px;height:10.70px;background:#34a853"></div><div style="position:absolute;left:272.07px;top:553.90px;width:6.93px;height:10.70px;background:#ff6d01"></div><div style="position:absolute;left:279.00px;top:553.90px;width:6.83px;height:10.70px;background:#46bdc6"></div><div class="t" style="right:954.80px;top:549.50px;font-size:9.8px;color:#222;-webkit-text-stroke:0.2px #222">9월</div><div style="position:absolute;left:73.70px;top:571.30px;width:134.00px;height:10.70px;background:#4285f4"></div><div style="position:absolute;left:207.70px;top:571.30px;width:4.99px;height:10.70px;background:#ea4335"></div><div style="position:absolute;left:212.69px;top:571.30px;width:33.23px;height:10.70px;background:#fbbc04"></div><div style="position:absolute;left:245.92px;top:571.30px;width:16.96px;height:10.70px;background:#34a853"></div><div style="position:absolute;left:262.88px;top:571.30px;width:2.92px;height:10.70px;background:#46bdc6"></div><div style="position:absolute;left:265.80px;top:571.30px;width:0.75px;height:10.70px;background:#7baaf7"></div><div class="t" style="right:954.80px;top:566.90px;font-size:9.8px;color:#222;-webkit-text-stroke:0.2px #222">10월</div><div style="position:absolute;left:73.70px;top:588.70px;width:206.68px;height:10.70px;background:#4285f4"></div><div style="position:absolute;left:280.38px;top:588.70px;width:8.51px;height:10.70px;background:#ea4335"></div><div style="position:absolute;left:288.88px;top:588.70px;width:12.52px;height:10.70px;background:#fbbc04"></div><div style="position:absolute;left:301.40px;top:588.70px;width:10.30px;height:10.70px;background:#34a853"></div><div style="position:absolute;left:311.70px;top:588.70px;width:4.96px;height:10.70px;background:#ff6d01"></div><div style="position:absolute;left:316.66px;top:588.70px;width:5.01px;height:10.70px;background:#46bdc6"></div><div style="position:absolute;left:321.67px;top:588.70px;width:4.10px;height:10.70px;background:#f07b72"></div><div class="t" style="right:954.80px;top:584.30px;font-size:9.8px;color:#222;-webkit-text-stroke:0.2px #222">11월</div><div style="position:absolute;left:73.70px;top:606.10px;width:173.34px;height:10.70px;background:#4285f4"></div><div style="position:absolute;left:247.04px;top:606.10px;width:18.93px;height:10.70px;background:#ea4335"></div><div style="position:absolute;left:265.97px;top:606.10px;width:0.57px;height:10.70px;background:#34a853"></div><div style="position:absolute;left:266.54px;top:606.10px;width:16.35px;height:10.70px;background:#ff6d01"></div><div style="position:absolute;left:282.89px;top:606.10px;width:9.10px;height:10.70px;background:#46bdc6"></div><div class="t" style="right:954.80px;top:601.70px;font-size:9.8px;color:#222;-webkit-text-stroke:0.2px #222">12월</div><div style="position:absolute;left:73.00px;top:408.80px;width:1.20px;height:213.70px;background:#333"></div><div class="t" style="left:-26.30px;width:200px;text-align:center;top:622.60px;font-size:9.2px;color:#444">0</div><div class="t" style="left:30.60px;width:200px;text-align:center;top:622.60px;font-size:9.2px;color:#444">250,000</div><div class="t" style="left:87.50px;width:200px;text-align:center;top:622.60px;font-size:9.2px;color:#444">500,000</div><div class="t" style="left:144.40px;width:200px;text-align:center;top:622.60px;font-size:9.2px;color:#444">750,000</div><div class="t" style="left:201.30px;width:200px;text-align:center;top:622.60px;font-size:9.2px;color:#444">1,000,000</div><div class="t" style="left:258.20px;width:200px;text-align:center;top:622.60px;font-size:9.2px;color:#444">1,250,000</div><div style="position:absolute;left:373.20px;top:409.20px;width:9.50px;height:9.30px;background:#4285f4"></div><div class="t" style="left:389.30px;top:403.90px;font-size:9.6px;color:#333">H <span class="k">카</span>드</div><div style="position:absolute;left:373.20px;top:426.46px;width:9.50px;height:9.30px;background:#ea4335"></div><div class="t" style="left:389.30px;top:421.16px;font-size:9.6px;color:#333">S <span class="k">카</span>드</div><div style="position:absolute;left:373.20px;top:443.72px;width:9.50px;height:9.30px;background:#fbbc04"></div><div class="t" style="left:389.30px;top:438.42px;font-size:9.6px;color:#333"><span class="k">네이</span>버 <span class="k">페</span>이</div><div style="position:absolute;left:373.20px;top:460.98px;width:9.50px;height:9.30px;background:#34a853"></div><div class="t" style="left:389.30px;top:455.68px;font-size:9.6px;color:#333"><span class="k">체크카</span>드</div><div style="position:absolute;left:373.20px;top:478.24px;width:9.50px;height:9.30px;background:#ff6d01"></div><div class="t" style="left:389.30px;top:472.94px;font-size:9.6px;color:#333"><span class="k">현</span>금/<span class="k">송</span>금</div><div style="position:absolute;left:373.20px;top:495.50px;width:9.50px;height:9.30px;background:#46bdc6"></div><div class="t" style="left:389.30px;top:490.20px;font-size:9.6px;color:#333"><span class="k">카카</span>오 <span class="k">페</span>이</div><div style="position:absolute;left:373.20px;top:512.76px;width:9.50px;height:9.30px;background:#7baaf7"></div><div class="t" style="left:389.30px;top:507.46px;font-size:9.6px;color:#333"><span class="k">서</span>울Pay</div><div style="position:absolute;left:373.20px;top:530.02px;width:9.50px;height:9.30px;background:#f07b72"></div><div class="t" style="left:389.30px;top:524.72px;font-size:9.6px;color:#333"><span class="k">기</span>타</div><div style="position:absolute;left:37.30px;top:384.40px;width:16.70px;height:16.60px;background:#fff;border-radius:5px;box-shadow:0 1px 3px rgba(0,0,0,.25)"></div><svg style="left:40px;top:387px" width="11" height="11" viewBox="0 0 22 22"><path d="M3 19l1.5-5L15.5 3l3.5 3.5L8 17.5z" fill="none" stroke="#7a7a7a" stroke-width="2" stroke-linejoin="round"/></svg><div style="position:absolute;left:627.00px;top:111.00px;width:10.00px;height:650.00px;background:#fff;border-left:1px solid #e8eaed"></div><div style="position:absolute;left:628.40px;top:131.00px;width:6.60px;height:20.40px;background:#dadce0;border-radius:4px"></div><div style="position:absolute;left:36.00px;top:749.60px;width:591.00px;height:11.40px;background:#fff;border-top:1px solid #e8eaed"></div><div style="position:absolute;left:0.00px;top:749.60px;width:36.00px;height:11.40px;background:#f3f3f3;border-top:1px solid #dadada"></div><div style="position:absolute;left:35.50px;top:749.60px;width:1.00px;height:11.40px;background:#dadada"></div><div style="position:absolute;left:38.00px;top:753.20px;width:172.00px;height:6.60px;background:#dadce0;border-radius:4px"></div><div style="position:absolute;left:648.00px;top:51.40px;width:363.00px;height:709.60px;background:#fff;border-radius:16px 16px 0 0"></div><svg style="left:663.2px;top:68px" width="14.5" height="10.6" viewBox="0 0 29 21"><rect x="1.5" y="1.5" width="26" height="18" fill="none" stroke="#188038" stroke-width="3"/><path d="M1.5 7.5h26M1.5 13.5h26M9.5 7.5v12" stroke="#188038" stroke-width="3"/></svg><div class="t" style="left:690.00px;top:62.50px;font-size:12.4px;color:#1f1f1f;word-spacing:1.2px;-webkit-text-stroke:0.45px #1f1f1f"><span class="k">피</span>봇 <span class="k">테이</span>블 <span class="k">편집</span>기</div><div style="position:absolute;left:684.80px;top:60.70px;width:71.10px;height:25.40px;border:2px solid #b3163f;border-radius:5px"></div><svg style="left:986px;top:70px" width="8" height="8" viewBox="0 0 8 8"><path d="M0.5 0.5l7 7M7.5 0.5l-7 7" stroke="#444746" stroke-width="1.4"/></svg><div style="position:absolute;left:648.00px;top:94.80px;width:363.00px;height:1.00px;background:#e3e3e3"></div><div style="position:absolute;left:845.00px;top:95.80px;width:1.00px;height:665.20px;background:#e3e3e3"></div><div style="position:absolute;left:662.70px;top:99.80px;width:163.10px;height:40.40px;border:2.5px solid #b3163f;border-radius:12px"></div><div style="position:absolute;left:669.50px;top:105.70px;width:150.00px;height:28.30px;border:1px solid #dadce0;border-radius:4px;background:#fff"></div><div class="t" style="left:676.40px;top:110.30px;font-size:11px;color:#1f1f1f">'<span class="k">소비지</span>출'!A:F</div><svg style="left:798.4px;top:113.5px" width="12.6" height="11.7" viewBox="0 0 25 23"><rect x="1.5" y="1.5" width="22" height="20" fill="none" stroke="#5f6368" stroke-width="2.6"/><path d="M1.5 11.5h22M12.5 1.5v20" stroke="#5f6368" stroke-width="2.6"/></svg><div style="position:absolute;left:656.00px;top:143.00px;width:176.00px;height:2.00px;background:#e8eaed"></div><div style="position:absolute;left:836.30px;top:99.30px;width:5.50px;height:539.70px;background:#dadce0;border-radius:3px"></div><div style="position:absolute;left:743.40px;top:152.10px;width:76.10px;height:18.80px;border:1px solid #dadce0;border-radius:3px;background:#fff"></div><div class="t" style="left:753.50px;top:151.50px;font-size:11px;color:#137333;-webkit-text-stroke:0.2px #137333"><span class="k">모</span>두 <span class="k">지우</span>기</div><div class="t" style="left:671.00px;top:178.80px;font-size:11px;color:#1f1f1f;-webkit-text-stroke:0.12px #1f1f1f"><span class="k">추</span>천</div><svg style="left:820.5px;top:186.5px" width="7" height="4.7" viewBox="0 0 14 9"><path d="M1.5 1.5L7 7l5.5-5.5" fill="none" stroke="#444746" stroke-width="2.4"/></svg><div class="t" style="left:671.00px;top:219.80px;font-size:11px;color:#1f1f1f;-webkit-text-stroke:0.12px #1f1f1f">행</div><div style="position:absolute;left:776.30px;top:218.10px;width:43.10px;height:18.60px;border:1px solid #dadce0;border-radius:3px;background:#fff"></div><div class="t" style="left:786.70px;top:217.40px;font-size:11px;color:#137333;-webkit-text-stroke:0.2px #137333"><span class="k">추</span>가</div><div style="position:absolute;left:671.30px;top:252.50px;width:146.40px;height:93.80px;background:#f1f3f4;border-radius:8px"></div><div class="t" style="left:683.00px;top:254.50px;font-size:11px;color:#1f1f1f;-webkit-text-stroke:0.12px #1f1f1f">월</div><svg style="left:802.3px;top:261.0px" width="8" height="8" viewBox="0 0 8 8"><path d="M0.5 0.5l7 7M7.5 0.5l-7 7" stroke="#5f6368" stroke-width="1.2"/></svg><div class="t" style="left:679.00px;top:280.60px;font-size:8.7px;color:#5f6368"><span class="k">순</span>서</div><div class="t" style="left:752.10px;top:280.60px;font-size:8.7px;color:#5f6368"><span class="k">정</span>렬 <span class="k">기</span>준</div><div style="position:absolute;left:678.00px;top:299.00px;width:59.20px;height:19.00px;background:#fff;border-radius:4px;box-shadow:0 0 0 0.5px #e3e3e3"></div><div class="t" style="left:684.50px;top:298.50px;font-size:9.3px;color:#1f1f1f"><span class="k">오름</span>차...</div><svg style="left:724.9000000000001px;top:307.0px" width="6" height="3" viewBox="0 0 6 3" preserveAspectRatio="none"><path d="M0 0h6L3 3z" fill="#444746"/></svg><div style="position:absolute;left:752.10px;top:299.00px;width:58.10px;height:19.00px;background:#fff;border-radius:4px;box-shadow:0 0 0 0.5px #e3e3e3"></div><div class="t" style="left:758.60px;top:298.50px;font-size:9.3px;color:#1f1f1f">월</div><svg style="left:797.9000000000001px;top:307.0px" width="6" height="3" viewBox="0 0 6 3" preserveAspectRatio="none"><path d="M0 0h6L3 3z" fill="#444746"/></svg><div style="position:absolute;left:678.00px;top:325.80px;width:14.00px;height:14.00px;background:#188038;border-radius:2px"></div><svg style="left:678px;top:325.8px" width="14" height="14" viewBox="0 0 14 14"><path d="M2.8 7.2l2.9 2.9 5.6-5.8" fill="none" stroke="#fff" stroke-width="1.8"/></svg><div class="t" style="left:701.20px;top:323.00px;font-size:9.6px;color:#5f6368"><span class="k">합</span>계 <span class="k">표</span>시</div><div class="t" style="left:671.00px;top:370.00px;font-size:11px;color:#1f1f1f;-webkit-text-stroke:0.12px #1f1f1f">열</div><div style="position:absolute;left:776.30px;top:368.70px;width:43.10px;height:18.20px;border:1px solid #dadce0;border-radius:3px;background:#fff"></div><div class="t" style="left:786.70px;top:367.80px;font-size:11px;color:#137333;-webkit-text-stroke:0.2px #137333"><span class="k">추</span>가</div><div style="position:absolute;left:670.70px;top:403.20px;width:146.80px;height:122.50px;background:#f1f3f4;border-radius:8px"></div><div class="t" style="left:682.40px;top:405.20px;font-size:11px;color:#1f1f1f;-webkit-text-stroke:0.12px #1f1f1f"><span class="k">결</span>제 <span class="k">수</span>단</div><svg style="left:801.7px;top:411.7px" width="8" height="8" viewBox="0 0 8 8"><path d="M0.5 0.5l7 7M7.5 0.5l-7 7" stroke="#5f6368" stroke-width="1.2"/></svg><div class="t" style="left:679.40px;top:431.50px;font-size:8.7px;color:#5f6368"><span class="k">순</span>서</div><div class="t" style="left:752.70px;top:431.50px;font-size:8.7px;color:#5f6368"><span class="k">정</span>렬 <span class="k">기</span>준</div><div style="position:absolute;left:678.00px;top:450.10px;width:59.40px;height:18.70px;background:#fff;border-radius:4px;box-shadow:0 0 0 0.5px #e3e3e3"></div><div class="t" style="left:684.50px;top:449.45px;font-size:9.3px;color:#1f1f1f"><span class="k">내림</span>차...</div><svg style="left:725.1px;top:457.95000000000005px" width="6" height="3" viewBox="0 0 6 3" preserveAspectRatio="none"><path d="M0 0h6L3 3z" fill="#444746"/></svg><div style="position:absolute;left:752.00px;top:450.10px;width:58.70px;height:18.70px;background:#fff;border-radius:4px;box-shadow:0 0 0 0.5px #e3e3e3"></div><div class="t" style="left:758.50px;top:449.45px;font-size:9.3px;color:#1f1f1f"><span class="k">금액</span>의 ...</div><svg style="left:798.4000000000001px;top:457.95000000000005px" width="6" height="3" viewBox="0 0 6 3" preserveAspectRatio="none"><path d="M0 0h6L3 3z" fill="#444746"/></svg><div style="position:absolute;left:753.80px;top:475.20px;width:54.20px;height:18.20px;background:#fff;border-radius:4px;box-shadow:0 0 0 0.5px #e3e3e3"></div><div class="t" style="left:760.30px;top:474.30px;font-size:9.3px;color:#1f1f1f"><span class="k">총</span>계</div><svg style="left:795.7px;top:482.79999999999995px" width="6" height="3" viewBox="0 0 6 3" preserveAspectRatio="none"><path d="M0 0h6L3 3z" fill="#444746"/></svg><div style="position:absolute;left:678.20px;top:504.30px;width:14.00px;height:14.00px;background:#188038;border-radius:2px"></div><svg style="left:678.2px;top:504.3px" width="14" height="14" viewBox="0 0 14 14"><path d="M2.8 7.2l2.9 2.9 5.6-5.8" fill="none" stroke="#fff" stroke-width="1.8"/></svg><div class="t" style="left:701.40px;top:501.50px;font-size:9.6px;color:#5f6368"><span class="k">합</span>계 <span class="k">표</span>시</div><div class="t" style="left:671.00px;top:549.70px;font-size:11px;color:#1f1f1f;-webkit-text-stroke:0.12px #1f1f1f">값</div><div style="position:absolute;left:776.30px;top:547.20px;width:43.10px;height:18.90px;border:1px solid #dadce0;border-radius:3px;background:#fff"></div><div class="t" style="left:786.70px;top:546.65px;font-size:11px;color:#137333;-webkit-text-stroke:0.2px #137333"><span class="k">추</span>가</div><div style="position:absolute;left:671.00px;top:581.00px;width:147.20px;height:73.30px;background:#f1f3f4;border-radius:8px"></div><div class="t" style="left:682.70px;top:583.00px;font-size:11px;color:#1f1f1f;-webkit-text-stroke:0.12px #1f1f1f"><span class="k">금</span>액</div><svg style="left:802px;top:589.5px" width="8" height="8" viewBox="0 0 8 8"><path d="M0.5 0.5l7 7M7.5 0.5l-7 7" stroke="#5f6368" stroke-width="1.2"/></svg><div class="t" style="left:679.10px;top:610.00px;font-size:8.7px;color:#5f6368"><span class="k">요</span>약 <span class="k">기</span>준</div><div class="t" style="left:752.40px;top:610.00px;font-size:8.7px;color:#5f6368"><span class="k">다음으</span>로 <span class="k">표</span>시</div><div style="position:absolute;left:677.60px;top:628.70px;width:60.30px;height:18.30px;background:#fff;border-radius:4px;box-shadow:0 0 0 0.5px #e3e3e3"></div><div class="t" style="left:684.10px;top:627.85px;font-size:9.3px;color:#1f1f1f">SUM</div><svg style="left:725.6px;top:636.35px" width="6" height="3" viewBox="0 0 6 3" preserveAspectRatio="none"><path d="M0 0h6L3 3z" fill="#444746"/></svg><div style="position:absolute;left:751.80px;top:628.70px;width:58.80px;height:18.30px;background:#fff;border-radius:4px;box-shadow:0 0 0 0.5px #e3e3e3"></div><div class="t" style="left:758.30px;top:627.85px;font-size:9.3px;color:#1f1f1f"><span class="k">기본</span>값</div><svg style="left:798.3000000000001px;top:636.35px" width="6" height="3" viewBox="0 0 6 3" preserveAspectRatio="none"><path d="M0 0h6L3 3z" fill="#444746"/></svg><div class="t" style="left:671.00px;top:677.70px;font-size:11px;color:#1f1f1f;-webkit-text-stroke:0.12px #1f1f1f"><span class="k">필</span>터</div><div style="position:absolute;left:776.30px;top:676.70px;width:43.10px;height:17.70px;border:1px solid #dadce0;border-radius:3px;background:#fff"></div><div class="t" style="left:786.70px;top:675.55px;font-size:11px;color:#137333;-webkit-text-stroke:0.2px #137333"><span class="k">추</span>가</div><div style="position:absolute;left:671.00px;top:710.20px;width:147.00px;height:79.80px;background:#f1f3f4;border-radius:8px"></div><div class="t" style="left:682.70px;top:712.20px;font-size:11px;color:#1f1f1f;-webkit-text-stroke:0.12px #1f1f1f">월</div><svg style="left:802px;top:718.7px" width="8" height="8" viewBox="0 0 8 8"><path d="M0.5 0.5l7 7M7.5 0.5l-7 7" stroke="#5f6368" stroke-width="1.2"/></svg><div class="t" style="left:679.00px;top:738.30px;font-size:8.7px;color:#5f6368"><span class="k">상</span>태</div><div style="position:absolute;left:677.60px;top:757.60px;width:133.00px;height:32.40px;background:#fff;border-radius:4px"></div><svg style="left:648px;top:396px" width="8" height="20" viewBox="0 0 8 20"><circle cx="3.8" cy="3.4" r="1.4" fill="#5f6368"/><circle cx="3.8" cy="9.5" r="1.4" fill="#5f6368"/><circle cx="3.8" cy="15.9" r="1.4" fill="#5f6368"/></svg><svg style="left:853px;top:106.5px" width="10.7" height="10.2" viewBox="0 0 22 21"><circle cx="8.5" cy="8.5" r="6.5" fill="none" stroke="#5f6368" stroke-width="2.6"/><path d="M13.5 13.5l7 7" stroke="#5f6368" stroke-width="2.8"/></svg><div class="t" style="left:875.00px;top:101.50px;font-size:11px;color:#80868b"><span class="k">검</span>색</div><div style="position:absolute;left:846.00px;top:126.80px;width:165.00px;height:1.00px;background:#e8eaed"></div><div class="t" style="left:855.00px;top:135.40px;font-size:11px;color:#1f1f1f"><span class="k">날</span>짜</div><div class="t" style="left:855.00px;top:162.20px;font-size:11px;color:#1f1f1f"><span class="k">금</span>액</div><div class="t" style="left:855.00px;top:189.00px;font-size:11px;color:#1f1f1f"><span class="k">분</span>류</div><div class="t" style="left:855.00px;top:215.80px;font-size:11px;color:#1f1f1f"><span class="k">결</span>제 <span class="k">수</span>단</div><div class="t" style="left:855.00px;top:242.60px;font-size:11px;color:#1f1f1f"><span class="k">메</span>모</div><div class="t" style="left:855.00px;top:269.40px;font-size:11px;color:#1f1f1f">월</div><div style="position:absolute;left:0.00px;top:761.00px;width:1024.00px;height:30.00px;background:#f9fbfd;border-top:1px solid #e8eaed"></div><div style="position:absolute;left:43.70px;top:775.60px;width:8.60px;height:1.30px;background:#444746"></div><div style="position:absolute;left:47.35px;top:771.90px;width:1.30px;height:8.70px;background:#444746"></div><div style="position:absolute;left:73.00px;top:771.75px;width:11.50px;height:1.70px;background:#444746"></div><div style="position:absolute;left:73.00px;top:775.35px;width:11.50px;height:1.70px;background:#444746"></div><div style="position:absolute;left:73.00px;top:778.95px;width:11.50px;height:1.70px;background:#444746"></div><div style="position:absolute;left:308.70px;top:761.30px;width:85.00px;height:29.70px;background:#e1e9f7"></div><div class="t" style="left:113.70px;top:767.30px;font-size:11px;color:#1f1f1f;-webkit-text-stroke:0.12px #1f1f1f"><span class="k">수</span>입</div><svg style="left:143.4px;top:775.8px" width="5.8" height="3" viewBox="0 0 6 3" preserveAspectRatio="none"><path d="M0 0h6L3 3z" fill="#444746"/></svg><div style="position:absolute;left:104.80px;top:786.90px;width:53.50px;height:3.10px;background:#4472c4"></div><div class="t" style="left:167.50px;top:767.30px;font-size:11px;color:#1f1f1f;-webkit-text-stroke:0.12px #1f1f1f"><span class="k">고정비</span>용</div><svg style="left:218.8px;top:775.8px" width="5.8" height="3" viewBox="0 0 6 3" preserveAspectRatio="none"><path d="M0 0h6L3 3z" fill="#444746"/></svg><div style="position:absolute;left:158.30px;top:786.90px;width:74.50px;height:3.10px;background:#f0961e"></div><div class="t" style="left:243.20px;top:767.30px;font-size:11px;color:#1f1f1f;-webkit-text-stroke:0.12px #1f1f1f"><span class="k">소비지</span>출</div><svg style="left:293.5px;top:775.8px" width="5.8" height="3" viewBox="0 0 6 3" preserveAspectRatio="none"><path d="M0 0h6L3 3z" fill="#444746"/></svg><div style="position:absolute;left:232.80px;top:786.90px;width:75.90px;height:3.10px;background:#f1c040"></div><div class="t" style="left:317.60px;top:767.30px;font-size:11px;font-weight:bold;color:#0b57d0"><span class="k">결제수단</span>별</div><svg style="left:378.5px;top:775.8px" width="5.8" height="3" viewBox="0 0 6 3" preserveAspectRatio="none"><path d="M0 0h6L3 3z" fill="#0b57d0"/></svg><div class="t" style="left:402.60px;top:767.30px;font-size:11px;color:#1f1f1f;-webkit-text-stroke:0.12px #1f1f1f"><span class="k">월</span>간 <span class="k">보고</span>서</div><svg style="left:467.3px;top:775.8px" width="5.8" height="3" viewBox="0 0 6 3" preserveAspectRatio="none"><path d="M0 0h6L3 3z" fill="#444746"/></svg><div class="t" style="left:491.60px;top:767.30px;font-size:11px;color:#1f1f1f;-webkit-text-stroke:0.12px #1f1f1f"><span class="k">대시보</span>드</div><svg style="left:542.3px;top:775.8px" width="5.8" height="3" viewBox="0 0 6 3" preserveAspectRatio="none"><path d="M0 0h6L3 3z" fill="#444746"/></svg><div class="t" style="left:567.70px;top:767.30px;font-size:11px;color:#1f1f1f;-webkit-text-stroke:0.12px #1f1f1f"><span class="k">템플</span>릿 <span class="k">사용방</span>법</div><svg style="left:652.2px;top:775.8px" width="5.8" height="3" viewBox="0 0 6 3" preserveAspectRatio="none"><path d="M0 0h6L3 3z" fill="#444746"/></svg><div style="position:absolute;left:557.60px;top:786.90px;width:109.10px;height:3.10px;background:#c6dafc"></div><svg style="left:999px;top:774px" width="5" height="8" viewBox="0 0 10 16"><path d="M8.5 1.5L2 8l6.5 6.5" fill="none" stroke="#444746" stroke-width="2.4"/></svg><div class="t" style="left:508.30px;width:200px;text-align:center;top:745.70px;font-size:7px;color:#9aa0a6">◂</div><div class="t" style="left:521.00px;width:200px;text-align:center;top:745.70px;font-size:7px;color:#9aa0a6">▸</div><div class="t" style="left:531.00px;width:200px;text-align:center;top:735.00px;font-size:7px;color:#9aa0a6">▾</div><div class="t" style="left:531.00px;width:200px;text-align:center;top:727.00px;font-size:7px;color:#9aa0a6">▴</div><div style="position:absolute;left:1022.80px;top:0.00px;width:1.20px;height:791.00px;background:#a9a9a9"></div><div style="position:absolute;left:0.00px;top:789.80px;width:1024.00px;height:1.20px;background:#c9c9c9"></div></div></body></html>
